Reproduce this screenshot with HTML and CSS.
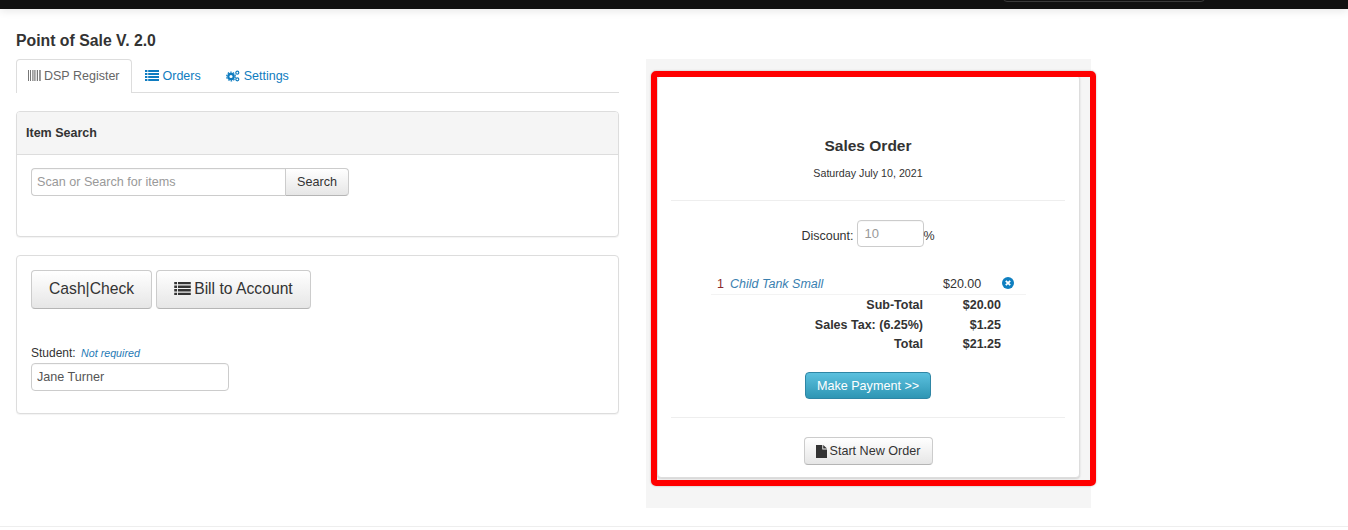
FILE: index.html
```html
<!DOCTYPE html>
<html lang="en">
<head>
<meta charset="utf-8">
<title>Point of Sale</title>
<link rel="stylesheet" href="styles.css">
</head>
<body>
<header class="topbar"><div class="topbar-search"></div></header>
<div class="page">
  <main class="left">
    <h1 class="title">Point of Sale V. 2.0</h1>
    <nav class="tabs">
      <a class="tab active">
        <svg class="icon barcode" viewBox="0 0 13 11"><path fill="#777" d="M0 0h1v11H0zM2 0h1v11H2zM4 0h.7v11H4zM5.5 0h1.2v11H5.5zM7.5 0h.7v11h-.7zM9 0h1v11H9zM11 0h.8v11H11zM12.3 0h.7v11h-.7z"/></svg>
        DSP Register
      </a>
      <a class="tab">
        <svg class="icon list" viewBox="0 0 14 11"><path fill="currentColor" d="M0 0h2.4v2H0zM3.2 0H14v2H3.2zM0 3h2.4v2H0zM3.2 3H14v2H3.2zM0 6h2.4v2H0zM3.2 6H14v2H3.2zM0 9h2.4v2H0zM3.2 9H14v2H3.2z"/></svg>
        Orders
      </a>
      <a class="tab">
        <svg class="icon cogs" viewBox="0 0 14 12"><g fill="none" stroke="currentColor"><circle cx="5" cy="6.5" r="2.7" stroke-width="2.2"/><circle cx="5" cy="6.5" r="4.3" stroke-width="1.2" stroke-dasharray="1.6 1.1"/><circle cx="11.3" cy="2.7" r="1.5" stroke-width="1.2"/><circle cx="11.3" cy="9.3" r="1.5" stroke-width="1.2"/></g></svg>
        Settings
      </a>
    </nav>

    <section class="panel search-panel">
      <div class="panel-heading">Item Search</div>
      <div class="panel-body">
        <div class="input-group">
          <input class="field search-field" type="text" placeholder="Scan or Search for items">
          <button class="btn search-btn" type="button">Search</button>
        </div>
      </div>
    </section>

    <section class="panel pay-panel">
      <div class="pay-buttons">
        <button class="btn btn-lg" type="button">Cash|Check</button>
        <button class="btn btn-lg" type="button">
          <svg class="icon list-lg" viewBox="0 0 14 11"><path fill="currentColor" d="M0 0h2.4v2H0zM3.2 0H14v2H3.2zM0 3h2.4v2H0zM3.2 3H14v2H3.2zM0 6h2.4v2H0zM3.2 6H14v2H3.2zM0 9h2.4v2H0zM3.2 9H14v2H3.2z"/></svg>
          Bill to Account
        </button>
      </div>
      <label class="student-label">Student: <em>Not required</em></label>
      <input class="field student-field" type="text" value="Jane Turner">
    </section>
  </main>

  <aside class="well">
    <div class="receipt">
      <h2 class="receipt-title">Sales Order</h2>
      <p class="receipt-date">Saturday July 10, 2021</p>
      <hr class="rule">
      <div class="discount">
        <span class="discount-label">Discount:</span>
        <input class="field discount-field" type="text" placeholder="10">
        <span class="discount-pct">%</span>
      </div>
      <div class="lines">
        <div class="line item">
          <span class="qty">1</span>
          <a class="item-name">Child Tank Small</a>
          <span class="item-price">$20.00</span>
          <svg class="remove" viewBox="0 0 12 12"><circle cx="6" cy="6" r="6" fill="#0f7fc0"/><path d="M3.8 3.8l4.4 4.4M8.2 3.8l-4.4 4.4" stroke="#fff" stroke-width="1.8"/></svg>
        </div>
        <div class="line total"><span class="total-label">Sub-Total</span><span class="total-val">$20.00</span></div>
        <div class="line total"><span class="total-label">Sales Tax: (6.25%)</span><span class="total-val">$1.25</span></div>
        <div class="line total last"><span class="total-label">Total</span><span class="total-val">$21.25</span></div>
      </div>
      <button class="btn btn-info" type="button">Make Payment &gt;&gt;</button>
      <hr class="rule rule-low">
      <button class="btn new-order" type="button">
        <svg class="icon file" viewBox="0 0 11 13"><path fill="currentColor" d="M0 0h6.3v4.4H11V13H0zM7.2 0L11 3.6H7.2z"/></svg>
        Start New Order
      </button>
    </div>
    <div class="highlight"></div>
  </aside>
</div>
<div class="footer-line"></div>
</body>
</html>
```
FILE: styles.css
```css
* { box-sizing: border-box; }
html, body { margin: 0; height: 100%; }
body {
  background: #fff;
  color: #333;
  font-family: "Liberation Sans", Arial, sans-serif;
  font-size: 12.5px;
  line-height: 20px;
  overflow: hidden;
}
.topbar {
  height: 9px;
  background: #111;
  box-shadow: 0 2px 8px rgba(0,0,0,.1);
  position: relative;
}
.topbar-search {
  position: absolute;
  left: 1003px;
  top: -8px;
  width: 202px;
  height: 10px;
  border: 1px solid #3a3a3a;
  border-radius: 4px;
}
.page {
  display: flex;
  gap: 27px;
  padding: 0 16px;
  height: 517px;
}
.left { width: 603px; padding-top: 21px; }
.title { margin: 0 0 7px; font-size: 15.8px; line-height: 22px; font-weight: bold; color: #333; }
.tabs { display: flex; height: 34px; border-bottom: 1px solid #ddd; margin-bottom: 18px; }
.tab {
  display: flex;
  align-items: center;
  gap: 4px;
  height: 34px;
  padding: 0 11px 2px;
  color: #0f7cc0;
  border: 1px solid transparent;
  border-bottom: 0;
  border-radius: 4px 4px 0 0;
  margin-right: 1px;
}
.tab.active { color: #666; background: #fff; border-color: #ddd; height: 34px; gap: 3px; }
.icon { display: inline-block; flex: none; }
.barcode { width: 13px; height: 11px; }
.list { width: 14px; height: 11px; }
.cogs { width: 14px; height: 12px; }
.panel {
  border: 1px solid #ddd;
  border-radius: 4px;
  background: #fff;
  box-shadow: 0 1px 1px rgba(0,0,0,.05);
}
.search-panel { height: 126px; margin-bottom: 18px; }
.panel-heading {
  height: 43px;
  padding: 11px 9px;
  background: #f5f5f5;
  border-bottom: 1px solid #ddd;
  border-radius: 3px 3px 0 0;
  font-weight: bold;
  color: #333;
}
.panel-body { padding: 13px 14px; }
.input-group { display: flex; }
.field {
  height: 28px;
  padding: 0 5px;
  border: 1px solid #ccc;
  border-radius: 4px;
  font: 12.6px "Liberation Sans", Arial, sans-serif;
  color: #555;
  background: #fff;
  box-shadow: inset 0 1px 1px rgba(0,0,0,.03);
}
.field::placeholder { color: #999; opacity: 1; }
.search-field { width: 254px; border-radius: 4px 0 0 4px; border-right: 0; }
.btn {
  font: 12.6px "Liberation Sans", Arial, sans-serif;
  color: #333;
  border: 1px solid #ccc;
  border-bottom-color: #b5b5b5;
  border-radius: 4px;
  background: linear-gradient(#fff, #e6e6e6);
  white-space: nowrap;
}
.search-btn { width: 64px; height: 28px; padding: 0; border-radius: 0 4px 4px 0; }
.pay-panel { height: 159px; padding: 14px 14px 0; }
.pay-buttons { display: flex; gap: 4px; margin-bottom: 35px; }
.btn-lg { height: 39px; font-size: 15.7px; padding: 0 17px 2px; display: flex; align-items: center; gap: 3px; }
.list-lg { width: 17px; height: 13px; }
.student-label { display: block; height: 19px; line-height: 18px; font-size: 12px; color: #333; }
.student-label em { color: #1f7ab5; font-size: 10.7px; margin-left: 2px; }
.student-field { display: block; width: 198px; }
.well {
  position: relative;
  width: 445px;
  height: 449px;
  margin-top: 50px;
  padding: 16px 11px 30px;
  background: #f5f5f5;
}
.receipt {
  height: 403px;
  background: #fff;
  border: 1px solid #ddd;
  border-radius: 4px;
  padding: 0 14px 0 13px;
  text-align: center;
  box-shadow: 0 1px 2px rgba(0,0,0,.15);
}
.receipt-title { margin: 59px 0 0; font-size: 15.5px; line-height: 22px; font-weight: bold; color: #333; }
.receipt-date { margin: 8px 0 0; font-size: 10.7px; line-height: 16px; color: #333; }
.rule { border: 0; border-top: 1px solid #eee; margin: 19px 0 0; }
.rule-low { margin-top: 18px; }
.discount { display: flex; justify-content: center; align-items: center; gap: 3px; margin-top: 18px; font-size: 12.5px; height: 28px; }
.discount-label { padding-top: 6px; margin-right: 1px; }
.discount-pct { padding-top: 6px; margin-left: -4px; }
.discount-field { width: 67px; height: 27px; font-size: 13px; padding: 0 6px; }
.lines { margin: 27px 0 0; text-align: left; }
.line { display: flex; align-items: center; height: 20px; margin: 0 39px 0 40px; }
.item { border-bottom: 1px solid #f3f3f3; height: 21px; font-size: 12.5px; }
.qty { width: 13px; margin-left: 6px; color: #8a2b2b; }
.item-name { width: 213px; font-style: italic; color: #3a80b0; }
.item-price { width: 59px; }
.remove { width: 12px; height: 12px; margin-bottom: 2px; }
.total { font-weight: bold; font-size: 12.5px; }
.total.last { height: 19px; margin-top: -1px; }
.total-label { width: 212px; text-align: right; }
.total-val { width: 78px; text-align: right; }
.btn-info {
  display: block;
  margin: 19px auto 0;
  width: 126px;
  height: 27px;
  padding: 0;
  color: #fff;
  border: 1px solid #2f86a5;
  background: linear-gradient(#5bc0de, #2f96b4);
}
.new-order {
  display: flex;
  justify-content: center;
  align-items: center;
  gap: 3px;
  margin: 19px auto 0;
  width: 129px;
  height: 28px;
  padding: 0;
}
.file { width: 11px; height: 13px; }
.highlight {
  position: absolute;
  left: 5px;
  top: 12px;
  width: 445px;
  height: 415px;
  border: 6px solid #f00;
  border-radius: 5px;
  box-shadow: 0 0 2px rgba(0,0,0,.3);
  pointer-events: none;
}
.footer-line { border-top: 1px solid #eee; }
```
